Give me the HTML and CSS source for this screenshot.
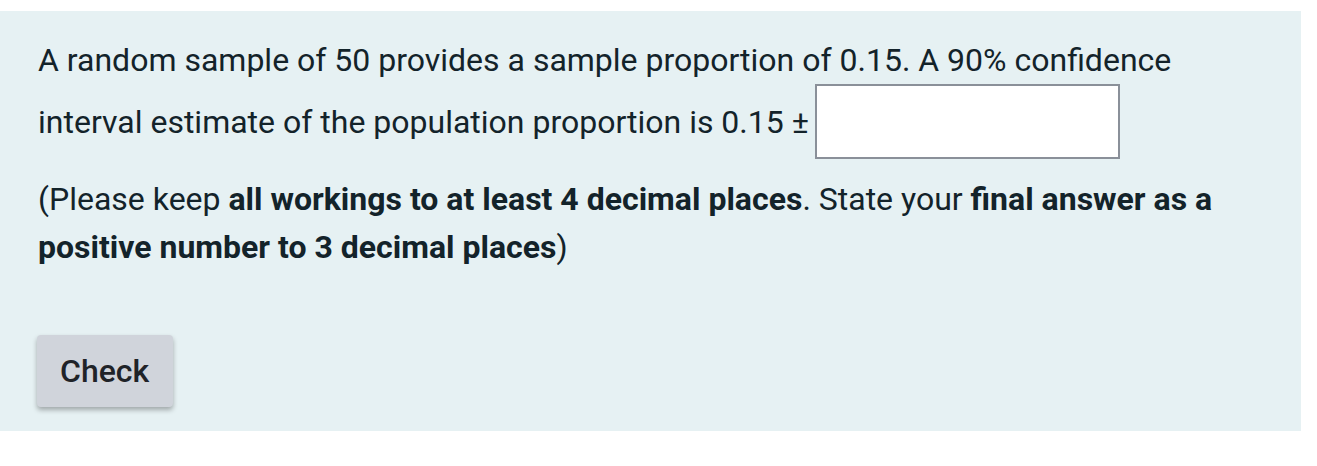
FILE: index.html
```html
<!DOCTYPE html>
<html>
<head>
<meta charset="utf-8">
<link rel="stylesheet" href="styles.css">
</head>
<body>
<div class="panel">
  <p class="q">A random sample of 50 provides a sample proportion of 0.15. A 90% confidence interval estimate of the population proportion is 0.15 ± <input class="answer" type="text"></p>
  <p class="note">(Please keep <b>all workings to at least 4 decimal places</b>. State your <b>final answer as a positive number to 3 decimal places</b>)</p>
  <div class="actions"><button class="check">Check</button></div>
</div>
</body>
</html>
```
FILE: styles.css
```css
html, body {
  margin: 0;
  padding: 0;
  background: #ffffff;
}
body {
  font-family: Roboto, "Liberation Sans", sans-serif;
  color: #13232a;
}
.panel {
  margin-top: 11px;
  width: 1301px;
  box-sizing: border-box;
  background: #e6f1f3;
  padding: 25px 37px 24px 38px;
}
.q, .note {
  margin: 0;
  font-size: 32px;
  line-height: 48px;
}
.q {
  max-width: 1180px;
}
.note {
  margin-top: 16px;
  max-width: 1200px;
}
.note b {
  font-weight: 700;
}
.answer {
  box-sizing: border-box;
  width: 305px;
  height: 75px;
  border: 2px solid #8a9099;
  background: #fff;
  font-family: Roboto, "Liberation Sans", sans-serif;
  font-size: 32px;
  margin: 0 0 0 -2px;
  padding: 0 8px;
}
.actions {
  margin-top: 64px;
}
.check {
  font-family: Roboto, "Liberation Sans", sans-serif;
  font-size: 32px;
  font-weight: 500;
  line-height: 48px;
  color: #1f2328;
  background: #d0d4db;
  border: none;
  border-radius: 4px;
  padding: 12px 24px 12px 23px;
  margin-left: -1px;
  box-shadow: 0 3px 5px rgba(0,0,0,0.3);
}
```
